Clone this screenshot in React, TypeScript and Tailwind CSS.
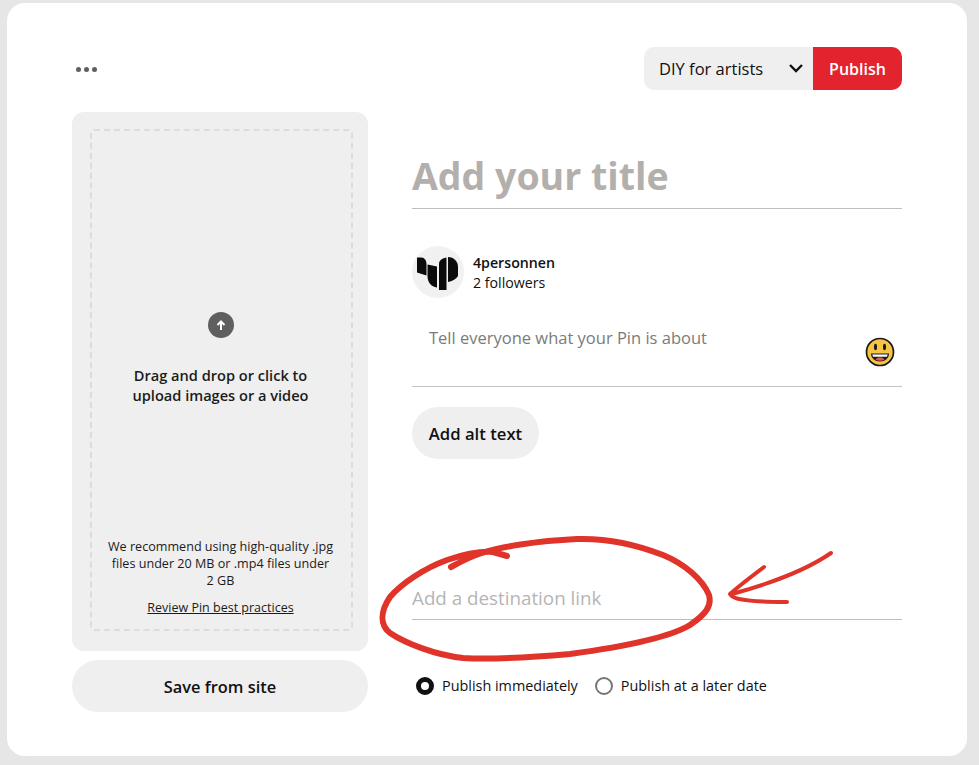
const sans = "font-['Open_Sans','Noto_Sans',sans-serif]";

function Logo() {
  return (
    <svg viewBox="0 0 52 52" className="w-[52px] h-[52px]">
      <path d="M5 11.500H9.500C12.500 11.500 14.500 14.500 14.500 18.500V29.500L5 26.500z" fill="#0b0b0b" />
      <path d="M15.500 18.500l9.500 2v21C19 41 15.500 36 15.500 30z" fill="#0b0b0b" />
      <path d="M27 18C27 15 29 12.500 34.500 11.500V44h-7.500z" fill="#0b0b0b" />
      <path d="M36 11C42 11 46 15.500 46 21V30C44 33 40 35.500 36 36z" fill="#0b0b0b" />
    </svg>
  );
}

function Emoji() {
  return (
    <svg viewBox="0 0 30 30" className="w-[30px] h-[30px]">
      <circle cx="15" cy="15" r="13.500" fill="#f6c445" stroke="#1a1a1a" strokeWidth="1.700" />
      <ellipse cx="10.500" cy="10" rx="1.500" ry="3.200" fill="#1a1a1a" />
      <ellipse cx="19.500" cy="10" rx="1.500" ry="3.200" fill="#1a1a1a" />
      <path d="M6 16.500h18c0 4.500-4 8-9 8s-9-3.500-9-8z" fill="#1a1a1a" />
      <path d="M7.300 17.500h15.400c-.2 1-.5 1.700-.8 2.300H8.100c-.3-.6-.6-1.300-.8-2.300z" fill="#fff" />
      <path d="M10.500 22.500c1-1.300 2.700-1.900 4.500-1.900s3.500.6 4.500 1.900c-1.300.8-2.800 1.200-4.500 1.200s-3.200-.4-4.500-1.200z" fill="#e2574c" />
    </svg>
  );
}

function Annotation() {
  return (
    <svg className="absolute left-0 top-0 w-[979px] h-[765px] pointer-events-none" viewBox="0 0 979 765" fill="none">
      <path
        d="M451 567C462 561 472 556 482 553C500 547 535 541 577 539C610 538 640 546 663 555C685 564 703 580 709 595C712 606 706 614 690 625C670 637 630 646 570 654C535 657 495 660 463 658C435 655 405 643 390 633C380 625 380 612 390 597C402 583 425 568 447 560C462 555 478 551 493 552L507 556"
        stroke="#e0332a"
        strokeWidth="6"
        strokeLinecap="round"
        strokeLinejoin="round"
      />
      <path d="M831 553C805 571 765 585 732 594" stroke="#e0332a" strokeWidth="4" strokeLinecap="round" />
      <path d="M764 567C752 576 740 585 730 594C732 599 745 602 787 602" stroke="#e0332a" strokeWidth="4" strokeLinecap="round" strokeLinejoin="round" />
    </svg>
  );
}

export default function App() {
  return (
    <div className={`relative w-[979px] h-[765px] overflow-hidden bg-[#e6e6e6] pt-[3px] pl-[7px] ${sans} text-[#111111]`}>
      <div className="w-[960px] h-[753px] bg-white rounded-[18px] pt-[44px] pl-[65px] pr-[65px]">
        <div className="flex items-center justify-between h-[43px] pl-[4px]">
          <div className="flex items-center pt-[1px]">
            <span className="w-[5px] h-[5px] mr-[3px] rounded-full bg-[#5f5f5f]" />
            <span className="w-[5px] h-[5px] mr-[3px] rounded-full bg-[#5f5f5f]" />
            <span className="w-[5px] h-[5px] rounded-full bg-[#5f5f5f]" />
          </div>
          <div className="flex h-[43px]">
            <div className="w-[169px] bg-[#efefef] rounded-l-[10px] flex items-center justify-between pl-[15px] pr-[9px]">
              <span className="text-[16.500px] pt-[1px]">DIY for artists</span>
              <svg viewBox="0 0 16 16" className="w-[16px] h-[16px] mb-[2px]" fill="none" stroke="#111" strokeWidth="2.400">
                <path d="M2 5l6 6 6-6" />
              </svg>
            </div>
            <div className="w-[89px] bg-[#e3242f] rounded-r-[10px] flex items-center justify-center text-white font-semibold text-[16px]">
              Publish
            </div>
          </div>
        </div>

        <div className="flex gap-[44px] mt-[22px]">
          <div className="w-[296px]">
            <div className="h-[539px] bg-[#efefef] rounded-[12px] pt-[17px] pb-[20px] pl-[18px] pr-[15px]">
              <div className="h-full border-2 border-dashed border-[#dcdcdc] rounded-[4px] flex flex-col items-center pr-[2px]">
                <div className="mt-[181px] w-[26px] h-[26px] rounded-full bg-[#5f5f5f] flex items-center justify-center">
                  <svg viewBox="0 0 12 12" className="w-[12px] h-[12px]" fill="none" stroke="#fff" strokeWidth="2">
                    <path d="M6 11V3M2.500 6L6 2.500 9.500 6" />
                  </svg>
                </div>
                <div className="mt-[27px] text-center font-semibold text-[14.600px] leading-[20px] text-[#1b1b1b]">
                  Drag and drop or click to
                  <br />
                  upload images or a video
                </div>
                <div className="mt-[133px] text-center text-[12.600px] leading-[17px] text-[#1b1b1b]">
                  We recommend using high-quality .jpg
                  <br />
                  files under 20 MB or .mp4 files under
                  <br />2 GB
                </div>
                <div className="mt-[10px] text-[12.500px] leading-[17px] underline text-[#1b1b1b]">Review Pin best practices</div>
              </div>
            </div>
            <div className="mt-[9px] h-[52px] rounded-full bg-[#efefef] flex items-center justify-center font-semibold text-[16.400px] pt-[2px]">
              Save from site
            </div>
          </div>

          <div className="flex-1 flex flex-col">
            <div className="h-[97px] border-b border-[#bdbdbd] flex items-end pb-[7px]">
              <span className="text-[37.500px] leading-[50px] font-bold text-[#b3afac]">Add your title</span>
            </div>
            <div className="mt-[37px] flex items-center gap-[9px]">
              <div className="w-[52px] h-[52px] rounded-full bg-[#f1f1f1]">
                <Logo />
              </div>
              <div className="pt-[2px]">
                <div className="text-[14.200px] leading-[20px] font-semibold">4personnen</div>
                <div className="text-[14.200px] leading-[20px]">2 followers</div>
              </div>
            </div>
            <div className="mt-[17px] h-[72px] border-b border-[#c4c4c4] relative pl-[17px] pt-[11px]">
              <span className="text-[16.500px] leading-[24px] text-[#7b7b7b]">Tell everyone what your Pin is about</span>
              <div className="absolute right-[7px] top-[22px]">
                <Emoji />
              </div>
            </div>
            <div className="mt-[20px] w-[127px] h-[52px] rounded-full bg-[#efefef] flex items-center justify-center font-semibold text-[16.700px] pt-[1px]">
              Add alt text
            </div>
            <div className="mt-[120px] h-[41px] border-b border-[#bdbdbd] pt-[6px] text-[18.800px] leading-[26px] text-[#b5b5b5]">
              Add a destination link
            </div>
            <div className="mt-[55px] flex items-center text-[14.400px] leading-[20px]">
              <span className="ml-[4px] w-[18px] h-[18px] rounded-full border-[5px] border-[#111] bg-white" />
              <span className="ml-[8px] pt-[1px]">Publish immediately</span>
              <span className="ml-[17px] w-[18px] h-[18px] rounded-full border-2 border-[#767676] bg-white" />
              <span className="ml-[8px] pt-[1px]">Publish at a later date</span>
            </div>
          </div>
        </div>
      </div>
      <Annotation />
    </div>
  );
}
